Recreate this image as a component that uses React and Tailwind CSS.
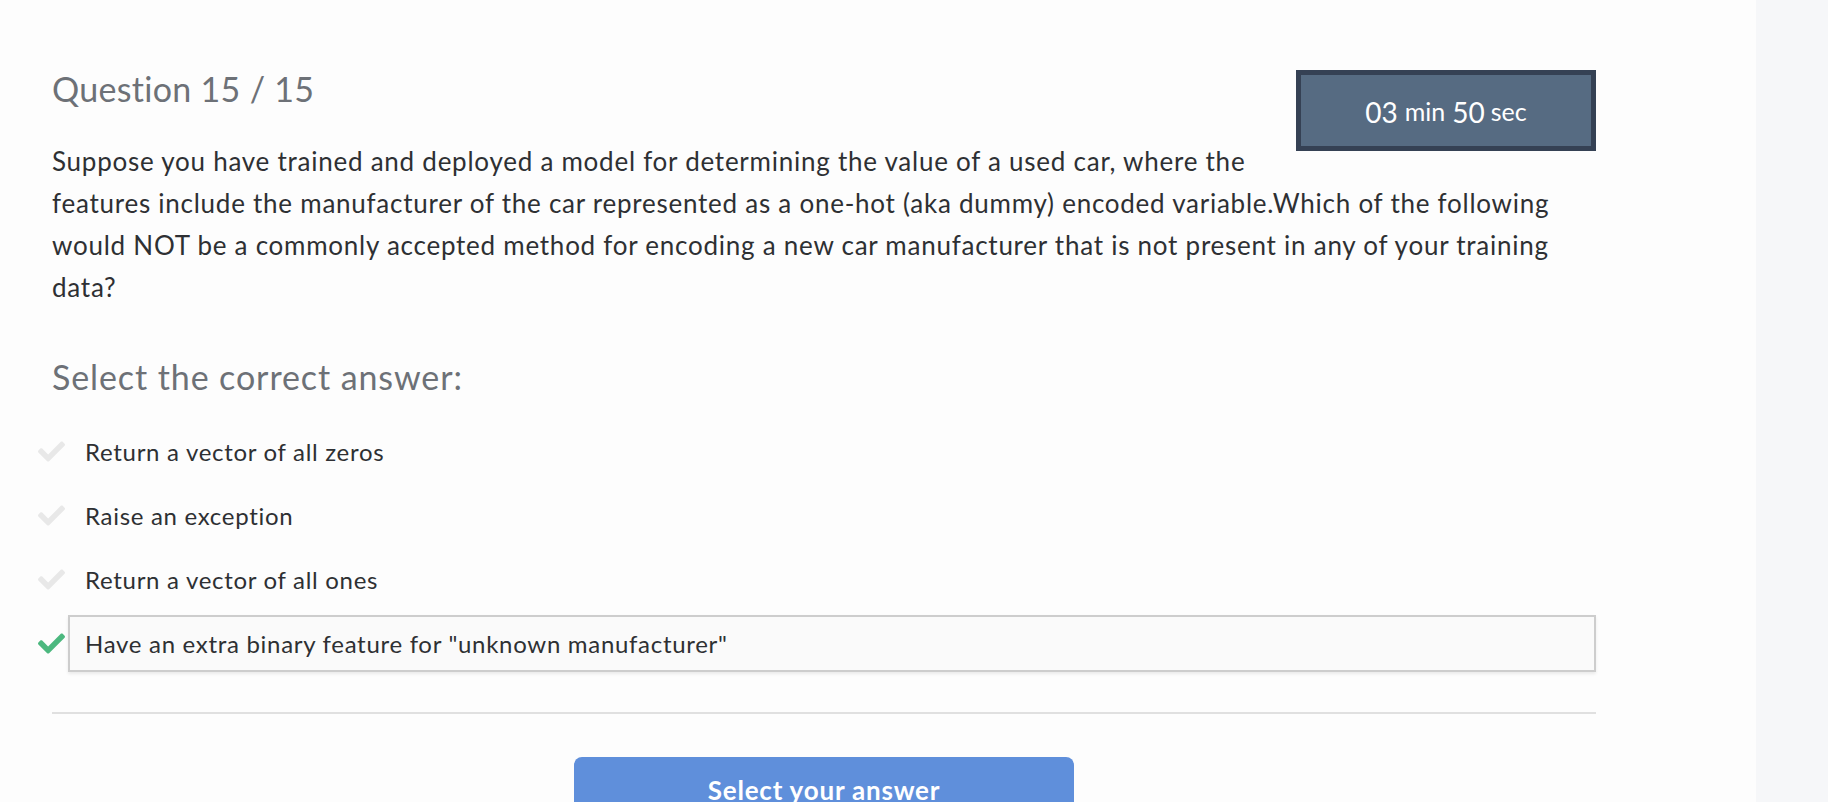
import React from "react";
import { FaCheck } from "react-icons/fa";

const options = [
  { text: "Return a vector of all zeros", selected: false },
  { text: "Raise an exception", selected: false },
  { text: "Return a vector of all ones", selected: false },
  { text: 'Have an extra binary feature for "unknown manufacturer"', selected: true },
];

export default function App() {
  return (
    <div className="flex h-[802px] w-full overflow-hidden bg-[#fdfdfd] font-['Lato','Open_Sans',sans-serif] [font-variant-ligatures:none]">
      <main className="flex-1 bg-[#fdfdfd]">
        <div className="ml-[52px] w-[1544px] pt-[69px]">
          <div className="float-right ml-[40px] mt-[1px] flex h-[81px] w-[300px] items-center justify-center border-[5px] border-[#354154] bg-[#566b82] pt-[2px] text-white">
            <span className="text-[28px] leading-none">03</span>
            <span className="ml-[7px] text-[25px] leading-none">min</span>
            <span className="ml-[7px] text-[28px] leading-none">50</span>
            <span className="ml-[6px] text-[25px] leading-none">sec</span>
          </div>
          <h1 className="text-[34px] leading-[40px] tracking-[0.3px] text-[#6d7177]">Question 15 / 15</h1>
          <p className="mt-[31px] text-[26px] leading-[42px] tracking-[0.75px] text-[#2e3033]">
            Suppose you have trained and deployed a model for determining the value of a used car, where the features include the manufacturer of the car represented as a one-hot (aka dummy) encoded variable.Which of the following would NOT be a commonly accepted method for encoding a new car manufacturer that is not present in any of your training data?
          </p>
          <h2 className="clear-both mt-[49px] text-[34px] leading-[40px] tracking-[0.9px] text-[#6d7177]">Select the correct answer:</h2>

          <div className="ml-[-14px] mt-[26px] flex flex-col gap-[7px]">
            {options.map((o) => (
              <div key={o.text} className="flex items-center">
                <FaCheck
                  className={o.selected ? "w-[27px] shrink-0 text-[#4cb87f]" : "w-[27px] shrink-0 text-[#e8e8e8]"}
                  size={27}
                />
                <div
                  className={
                    o.selected
                      ? "ml-[3px] flex h-[57px] flex-1 items-center border-2 border-[#cdcdcd] bg-[#fafafa] pl-[15px] text-[24px] tracking-[0.7px] text-[#2e3033] shadow-[0_2px_3px_rgba(0,0,0,0.08)]"
                      : "ml-[3px] flex h-[57px] flex-1 items-center border-2 border-transparent pl-[15px] text-[24px] tracking-[0.7px] text-[#2e3033]"
                  }
                >
                  {o.text}
                </div>
              </div>
            ))}
          </div>

          <div className="mt-[40px] h-[2px] w-full bg-[#e0e0e0]" />

          <div className="mt-[43px] flex justify-center">
            <div className="h-[80px] w-[500px] rounded-[8px] bg-[#5f8fdb] pt-[14px] text-center text-[26px] font-bold tracking-[0.8px] text-white">
              Select your answer
            </div>
          </div>
        </div>
      </main>
      <aside className="w-[72px] shrink-0 bg-[#f6f7f9]" />
    </div>
  );
}
